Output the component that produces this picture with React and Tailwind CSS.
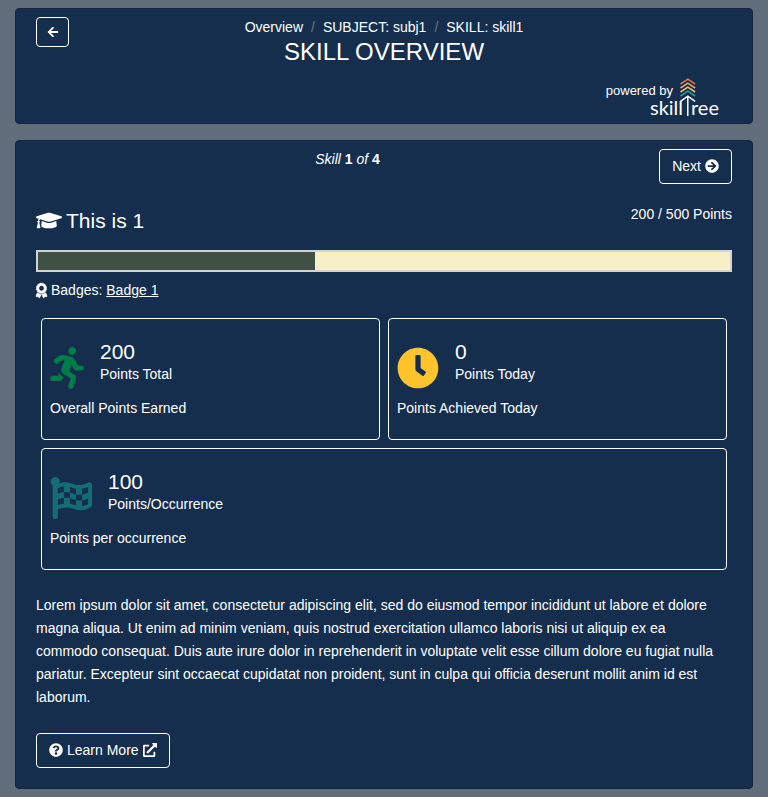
import React from "react";
import {
  FaArrowCircleRight,
  FaArrowLeft,
  FaAward,
  FaClock,
  FaExternalLinkAlt,
  FaFlagCheckered,
  FaGraduationCap,
  FaQuestionCircle,
  FaRunning,
} from "react-icons/fa";

function Logo() {
  return (
    <svg width="70" height="43" viewBox="0 0 70 43" fill="none" role="img" aria-label="SkillTree">
      <g strokeWidth="1.5">
        <path d="M30.5 6l7.3-4.8 7.3 4.8" stroke="#e76f51" />
        <path d="M30.5 10l7.3-4.8 7.3 4.8" stroke="#f4a261" />
        <path d="M30.5 14l7.3-4.8 7.3 4.8" stroke="#e9c46a" />
        <path d="M30.5 18l7.3-4.8 7.3 4.8" stroke="#2a9d8f" />
        <path d="M30.5 23.4l7.3-5.2 7.3 5.2M37.8 18v20" stroke="#fff" />
      </g>
      <g fill="#fff" className="font-['Lato',sans-serif] text-[20px]">
        <text x="0" y="37">skill</text>
        <text x="41" y="37">ree</text>
      </g>
    </svg>
  );
}

function Panel({ className, children }) {
  return (
    <section className={`rounded border border-[#14273f] bg-[#152e4d] px-5 ${className}`}>
      {children}
    </section>
  );
}

function StatCard({ icon, value, label, note, className = "" }) {
  return (
    <div className={`rounded border border-white px-2 pt-5 pb-[19px] ${className}`}>
      <div className="flex items-start gap-4">
        <div className="pt-2">{icon}</div>
        <div>
          <div className="text-[21px] leading-[25px]">{value}</div>
          <div className="leading-5">{label}</div>
        </div>
      </div>
      <p className="mt-2 leading-[23px]">{note}</p>
    </div>
  );
}

export default function App() {
  return (
    <main className="min-h-screen bg-[#626d7c] px-[15px] py-2 font-['Liberation_Sans',Arial,sans-serif] text-sm text-white">
      <Panel className="pt-2 pb-[2px]">
        <header>
          <div className="grid grid-cols-[1fr_auto_1fr] items-start">
            <button type="button" aria-label="Back" className="flex h-[30px] w-[33px] items-center justify-center rounded border border-white pb-px text-[12px]">
              <FaArrowLeft />
            </button>
            <div className="text-center">
              <nav aria-label="Breadcrumb">
                <ol className="flex gap-2 leading-5">
                  <li><a href="#overview">Overview</a></li>
                  <li aria-hidden="true" className="text-[#6c757d]">/</li>
                  <li><a href="#subject">SUBJECT: subj1</a></li>
                  <li aria-hidden="true" className="text-[#6c757d]">/</li>
                  <li>SKILL: skill1</li>
                </ol>
              </nav>
              <h1 className="text-2xl leading-[29px]">SKILL OVERVIEW</h1>
            </div>
          </div>
          <div className="mt-3 flex items-start justify-end pr-3">
            <span className="-mr-[23px] pt-[3px] text-[13px] leading-5">powered by</span>
            <Logo />
          </div>
        </header>
      </Panel>

      <Panel className="mt-4 pt-2 pb-5">
        <div className="flex items-start">
          <p className="flex-1 text-center leading-5">
            <i>Skill</i> <b>1</b> <i>of</i> <b>4</b>
          </p>
          <button type="button" className="flex h-[35px] items-center gap-1 rounded border border-white px-3 pb-[2px]">
            Next <FaArrowCircleRight />
          </button>
        </div>

        <div className="mt-5 flex items-start justify-between">
          <h2 className="flex items-center gap-1 pt-1 text-[21px] leading-[25px]">
            <FaGraduationCap className="h-[21px] w-[26px]" />
            This is 1
          </h2>
          <span className="leading-5">200 / 500 Points</span>
        </div>

        <div role="progressbar" aria-label="Skill progress" aria-valuenow={200} aria-valuemin={0} aria-valuemax={500} className="mt-[17px] h-[22px] border-2 border-[#d3d3d3] bg-[#f7f0c6]">
          <div className="h-full w-2/5 bg-[#3f5044]" />
        </div>

        <p className="mt-[7px] flex items-center gap-1 leading-[23px]">
          <FaAward className="h-[15px] w-[11px] overflow-visible stroke-white stroke-[24px]" />
          <span>Badges: <a href="#badge1" className="underline">Badge 1</a></span>
        </p>

        <div className="mx-[5px] mt-4 grid grid-cols-2 gap-2">
          <StatCard icon={<FaRunning className="h-[42px] w-[34px] text-[#007c49]" />} value="200" label="Points Total" note="Overall Points Earned" />
          <StatCard icon={<FaClock className="size-[42px] text-[#ffc42b]" />} value="0" label="Points Today" note="Points Achieved Today" />
          <StatCard className="col-span-2" icon={<FaFlagCheckered className="size-[42px] text-[#146c75]" />} value="100" label="Points/Occurrence" note="Points per occurrence" />
        </div>

        <p className="mt-6 pr-4 leading-[23px]">
          Lorem ipsum dolor sit amet, consectetur adipiscing elit, sed do eiusmod tempor incididunt ut labore et dolore magna aliqua. Ut enim ad minim veniam, quis nostrud exercitation ullamco laboris nisi ut aliquip ex ea commodo consequat. Duis aute irure dolor in reprehenderit in voluptate velit esse cillum dolore eu fugiat nulla pariatur. Excepteur sint occaecat cupidatat non proident, sunt in culpa qui officia deserunt mollit anim id est laborum.
        </p>

        <a href="#learn-more" className="mt-6 inline-flex h-[35px] items-center gap-1 rounded border border-white px-3 pb-[2px]">
          <FaQuestionCircle /> Learn More <FaExternalLinkAlt />
        </a>
      </Panel>
    </main>
  );
}
